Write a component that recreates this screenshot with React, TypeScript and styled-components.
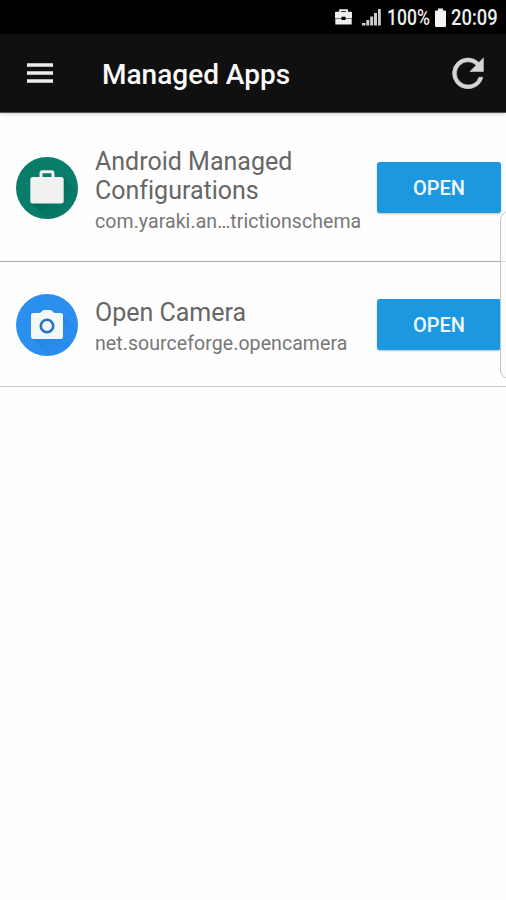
import React from 'react';
import styled, { createGlobalStyle } from 'styled-components';

const GlobalStyle = createGlobalStyle`
  * { box-sizing: border-box; }
  html, body { margin: 0; background: #fff; }
  body { font-family: Roboto, "Liberation Sans", sans-serif; }
`;

const Screen = styled.div`
  position: relative;
  width: 506px;
  height: 900px;
  overflow: hidden;
  background: #fefefe;
`;

const StatusBar = styled.div`
  height: 34px;
  padding-left: 334px;
  display: flex;
  align-items: center;
  background: #000;
  color: #eee;
  svg { display: block; flex: none; }
`;

const SignalSlot = styled.div`
  margin-left: 9px;
`;

const BatterySlot = styled.div`
  margin-left: 5px;
`;

const StatusText = styled.span<{ $width: number; $scale: number }>`
  display: block;
  flex: none;
  width: ${p => p.$width}px;
  margin-left: 5px;
  font-size: 22px;
  font-weight: 500;
  line-height: 34px;
  white-space: nowrap;
  transform: translateY(1px) scaleX(${p => p.$scale});
  transform-origin: left center;
`;

const AppBar = styled.header`
  height: 79px;
  padding: 0 22px 0 27px;
  display: flex;
  align-items: center;
  background: #101010;
  border-bottom: 1px solid #555;
  box-shadow: 0 1px 4px rgba(0, 0, 0, 0.2);
  position: relative;
`;

const BarButton = styled.button`
  padding: 0;
  border: 0;
  background: none;
  display: block;
  svg { display: block; }
`;

const Title = styled.h1`
  flex: 1;
  margin: 2px 0 0 49px;
  color: #fafafa;
  font-size: 28px;
  font-weight: 500;
`;

const Row = styled.div<{ $height: number; $line: string }>`
  height: ${p => p.$height}px;
  padding: 0 5px 0 16px;
  display: flex;
  align-items: center;
  border-bottom: 1px solid ${p => p.$line};
`;

const AppIcon = styled.svg`
  width: 62px;
  height: 62px;
  margin-top: 1px;
  flex: none;
`;

const Info = styled.div`
  flex: 1;
  min-width: 0;
  margin-left: 17px;
  padding-top: 7px;
  white-space: nowrap;
`;

const Name = styled.div`
  color: #666;
  font-size: 25px;
  line-height: 29.5px;
  font-variant-ligatures: none;
`;

const PackageId = styled.div`
  margin-top: 2px;
  color: #777;
  font-size: 19.5px;
  line-height: 27px;
  letter-spacing: 0.07px;
`;

const OpenButton = styled.button`
  width: 124px;
  height: 51px;
  flex: none;
  padding: 2px 0 0;
  border: 0;
  border-radius: 3px;
  background: #1b98df;
  box-shadow: 0 1px 2px rgba(0, 0, 0, 0.25);
  color: #f2faff;
  font: 500 20px Roboto, sans-serif;
`;

const EdgeHandle = styled.div`
  position: absolute;
  left: 500px;
  top: 211px;
  width: 20px;
  height: 168px;
  border: 1px solid #c4c4c4;
  border-radius: 9px;
  background: rgba(250, 250, 250, 0.65);
`;

const WorkIcon = () => (
  <svg width="19" height="18" viewBox="0 0 19 18">
    <path d="M6 4V2.200h7V4" fill="none" stroke="#eee" strokeWidth="1.8" />
    <path
      d="M2 3.700h15a1 1 0 0 1 1 1V10h-6.500V8.800h-4V10H1V4.700a1 1 0 0 1 1-1zM1.300 10.600h6.200v1.400h4v-1.400h6.200V16.500H1.300z"
      fill="#eee"
    />
  </svg>
);

const SignalIcon = () => (
  <svg width="20" height="18" viewBox="0 0 20 18">
    <path d="M0 15h3.500v2.500H0zM4.300 12h3v5.500h-3zM8.200 8.500h3v9h-3zM12 5h3v12.500h-3zM16 1h2.800v16.500H16z" fill="#ccc" />
  </svg>
);

const BatteryIcon = () => (
  <svg width="11" height="19" viewBox="0 0 11 19">
    <path d="M3 0.500h5v2h2a1 1 0 0 1 1 1V18a1 1 0 0 1-1 1H1a1 1 0 0 1-1-1V3.500a1 1 0 0 1 1-1h2z" fill="#f4f4f4" />
  </svg>
);

const MenuIcon = () => (
  <svg width="26" height="20" viewBox="0 0 26 20">
    <path d="M0 2h26M0 10h26M0 18h26" stroke="#eee" strokeWidth="3.4" />
  </svg>
);

const RefreshIcon = () => (
  <svg width="32" height="32" viewBox="3.7 3.5 16.6 16.6">
    <path
      d="M17.65 6.35A7.958 7.958 0 0 0 12 4a8 8 0 1 0 7.73 10h-2.08A5.99 5.99 0 0 1 12 18a6 6 0 1 1 0-12c1.66 0 3.14.69 4.22 1.78L13 11h7V4z"
      fill="#d6d6d6"
      stroke="#d6d6d6"
      strokeWidth="0.3"
    />
  </svg>
);

const BriefcaseAppIcon = () => (
  <AppIcon viewBox="0 0 62 62">
    <defs>
      <clipPath id="workCircle"><circle cx="31" cy="31" r="31" /></clipPath>
      <linearGradient id="workShade" x1="0" y1="0" x2="1" y2="1">
        <stop offset="0.3" stopColor="#005b4d" stopOpacity="0.5" />
        <stop offset="0.7" stopColor="#00796b" stopOpacity="0" />
      </linearGradient>
    </defs>
    <circle cx="31" cy="31" r="31" fill="#087d6a" />
    <path d="M47 21L75 49V75H42L16 46z" fill="url(#workShade)" clipPath="url(#workCircle)" />
    <path d="M25 21v-4.500q0-1.800 1.800-1.800h8.400q1.800 0 1.800 1.800V21" fill="none" stroke="#f1f1f1" strokeWidth="3" />
    <rect x="14.300" y="20" width="33.400" height="26.500" rx="2.500" fill="#f1f1f1" />
  </AppIcon>
);

const CameraAppIcon = () => (
  <AppIcon viewBox="0 0 62 62">
    <defs>
      <clipPath id="cameraCircle"><circle cx="31" cy="31" r="31" /></clipPath>
      <linearGradient id="cameraShade" x1="0" y1="0" x2="1" y2="1">
        <stop offset="0.3" stopColor="#1769c8" stopOpacity="0.25" />
        <stop offset="0.75" stopColor="#2b8ff0" stopOpacity="0" />
      </linearGradient>
    </defs>
    <circle cx="31" cy="31" r="31" fill="#2b8ff0" />
    <path d="M46 21L75 50V75H46L16 45z" fill="url(#cameraShade)" clipPath="url(#cameraCircle)" />
    <path
      d="M17.500 19h6.500l2.500-2.300q.7-.7 1.700-.7h6q1 0 1.700.7l2.500 2.300h6.100q2.500 0 2.500 2.500v21q0 2.500-2.500 2.500h-27q-2.500 0-2.500-2.500V21.500q0-2.500 2.500-2.500z"
      fill="#f5f6f7"
    />
    <circle cx="31" cy="32" r="6.200" fill="#f5f6f7" stroke="#2473c4" strokeWidth="2.600" />
  </AppIcon>
);

export default function App() {
  return (
    <>
      <GlobalStyle />
      <Screen>
        <StatusBar>
          <WorkIcon />
          <SignalSlot><SignalIcon /></SignalSlot>
          <StatusText $width={43} $scale={0.8}>100%</StatusText>
          <BatterySlot><BatteryIcon /></BatterySlot>
          <StatusText $width={46} $scale={0.835}>20:09</StatusText>
        </StatusBar>
        <AppBar>
          <BarButton aria-label="Menu"><MenuIcon /></BarButton>
          <Title>Managed Apps</Title>
          <BarButton aria-label="Refresh"><RefreshIcon /></BarButton>
        </AppBar>
        <Row $height={149} $line="#aaa">
          <BriefcaseAppIcon />
          <Info>
            <Name>Android Managed<br />Configurations</Name>
            <PackageId>com.yaraki.an…trictionschema</PackageId>
          </Info>
          <OpenButton>OPEN</OpenButton>
        </Row>
        <Row $height={125} $line="#ccc">
          <CameraAppIcon />
          <Info>
            <Name>Open Camera</Name>
            <PackageId>net.sourceforge.opencamera</PackageId>
          </Info>
          <OpenButton>OPEN</OpenButton>
        </Row>
        <EdgeHandle />
      </Screen>
    </>
  );
}
